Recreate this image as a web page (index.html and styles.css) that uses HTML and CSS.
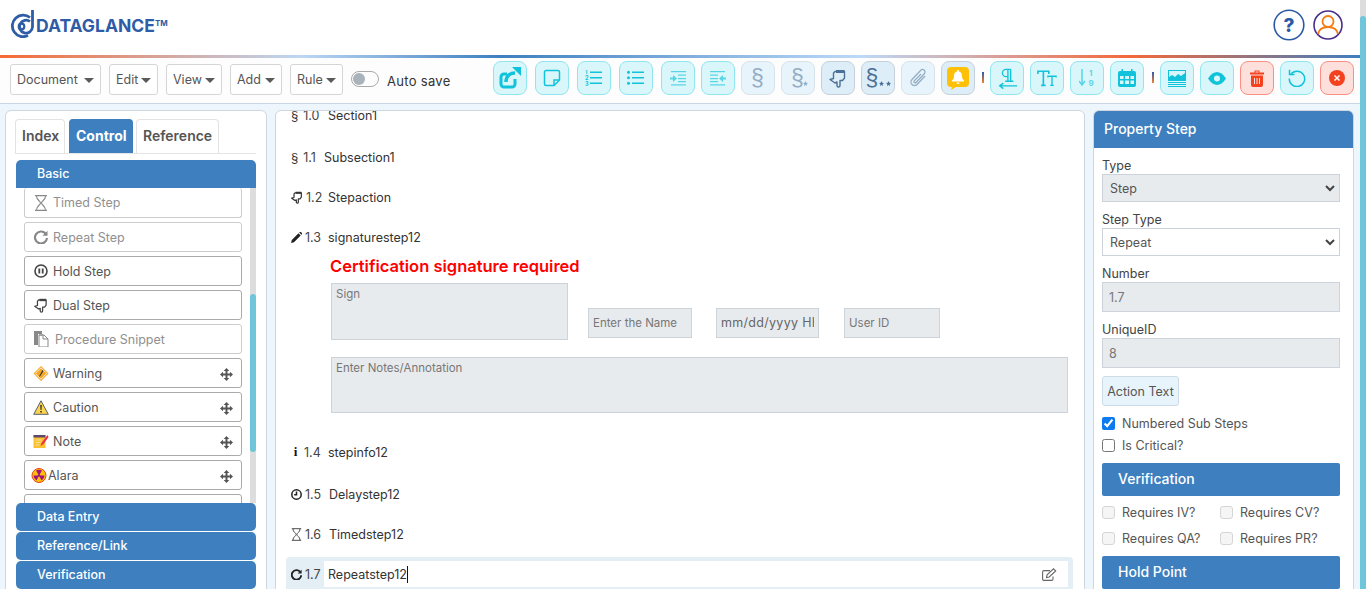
FILE: index.html
```html
<!DOCTYPE html>
<html>
  <head>
    <meta charset="UTF-8">
    <title>Dataglance</title>
    <link rel="stylesheet" href="styles.css">
  </head>
  <body>
    <div class="page">
      <header class="topbar">
        <div class="logo">
          <svg class="logo-mark" width="25" height="28" viewBox="0 0 25 28" fill="none" stroke="#2f5ca6" stroke-width="2.800"><path d="M22.500 0v17a6.500 6.500 0 1 1-2.500-5.500"/><path d="M18 25.500a10.800 10.800 0 1 1 2-18"/><circle cx="11.500" cy="16.500" r="2.800" stroke-width="2.200"/></svg>
          <span class="logo-text">DATAGLANCE<sup>TM</sup></span>
        </div>
        <div class="top-icons">
          <svg width="32" height="32" viewBox="0 0 32 32"><circle cx="16" cy="16" r="14.800" fill="none" stroke="#2b5aa5" stroke-width="1.600"/><text x="16" y="22.500" text-anchor="middle" class="help-mark">?</text></svg>
          <svg width="30" height="30" viewBox="0 0 30 30" fill="none"><circle cx="15" cy="15" r="14" stroke="#4a2d8c" stroke-width="1.600"/><circle cx="15" cy="11.500" r="5.500" stroke="#f57c14" stroke-width="1.800"/><path d="M5 24c1-5 5-7 10-7s9 2 10 7" stroke="#f57c14" stroke-width="1.800"/></svg>
        </div>
      </header>
      <div class="rainbow"></div>

      <nav class="toolbar">
        <div class="menus">
          <button class="menu w-doc">Document<i class="caret"></i></button>
          <button class="menu w-edit">Edit<i class="caret"></i></button>
          <button class="menu w-view">View<i class="caret"></i></button>
          <button class="menu w-add">Add<i class="caret"></i></button>
          <button class="menu w-rule">Rule<i class="caret"></i></button>
          <span class="toggle"><i></i></span>
          <span class="autosave">Auto save</span>
        </div>
        <div class="tools">
          <button class="tool cyan wide"><svg width="26" height="26" viewBox="0 0 26 26" fill="none" stroke="#11c3da" stroke-width="3"><path d="M18 14v5a3 3 0 0 1-3 3H7a3 3 0 0 1-3-3v-7a3 3 0 0 1 3-3h3"/><path d="M9 17c0-6 4-9 9-9" stroke-width="3.500"/><path d="M15 2h9v9z" fill="#11c3da" stroke="none"/></svg></button>
          <button class="tool cyan wide"><svg width="18" height="18" viewBox="0 0 18 18" fill="none" stroke="#11c3da" stroke-width="1.500"><path d="M1.500 3a1.500 1.500 0 0 1 1.500-1.500h12a1.500 1.500 0 0 1 1.500 1.500v8l-5.500 5.500H3a1.500 1.500 0 0 1-1.500-1.500z"/><path d="M16 11h-5v5.500"/></svg></button>
          <button class="tool cyan wide"><svg width="18" height="16" viewBox="0 0 18 16" fill="#11c3da"><rect x="5" y="1.500" width="12" height="1.500"/><rect x="5" y="7" width="12" height="1.500"/><rect x="5" y="12.500" width="12" height="1.500"/><text x="0" y="4" class="mini">1</text><text x="0" y="10" class="mini">2</text><text x="0" y="16" class="mini">3</text></svg></button>
          <button class="tool cyan wide"><svg width="18" height="16" viewBox="0 0 18 16" fill="#11c3da"><rect x="5" y="1.500" width="12" height="1.500"/><rect x="5" y="7" width="12" height="1.500"/><rect x="5" y="12.500" width="12" height="1.500"/><circle cx="1.500" cy="2.200" r="1.500"/><circle cx="1.500" cy="7.700" r="1.500"/><circle cx="1.500" cy="13.200" r="1.500"/></svg></button>
          <button class="tool cyan faded"><svg width="16" height="16" viewBox="0 0 16 16" fill="#11c3da"><rect x="1" y="1" width="15" height="1.200"/><rect x="8" y="4.500" width="8" height="1.200"/><rect x="8" y="8" width="8" height="1.200"/><rect x="8" y="11" width="8" height="1.200"/><rect x="1" y="14.300" width="15" height="1.200"/><path d="M0 7.500h3V5l4 3.500-4 3.500V9.500H0z"/></svg></button>
          <button class="tool cyan faded"><svg width="16" height="16" viewBox="0 0 16 16" fill="#11c3da"><rect y="1" width="15" height="1.200"/><rect y="4.500" width="8" height="1.200"/><rect y="8" width="8" height="1.200"/><rect y="11" width="8" height="1.200"/><rect y="14.300" width="15" height="1.200"/><path d="M16 7.500h-3V5L9 8.500l4 3.500V9.500h3z"/></svg></button>
          <button class="tool muted"><span class="sect">§</span></button>
          <button class="tool muted"><span class="sect">§</span><svg class="stars" width="5" height="5" viewBox="0 0 10 10" fill="#93aec5"><path d="M5 0l1.500 3.500L10 4 7.400 6.300 8 10 5 8 2 10l.6-3.700L0 4l3.500-.5z"/></svg></button>
          <button class="tool solid"><svg width="18" height="19" viewBox="0 0 18 19" fill="none" stroke="#4c7196" stroke-width="1.400"><path d="M6 2.500h9.500v6.500l-2 2.500H11v5a1.500 1.500 0 0 1-3 0v-3.500l-2 1-5-3.500 3.500-1V4z" stroke-linejoin="round"/><path d="M7 1h8.500v3H7z" fill="#4c7196" stroke="none"/></svg></button>
          <button class="tool solid"><span class="sect dark">§</span><svg class="stars two" width="12" height="5" viewBox="0 0 24 10" fill="#4c7196"><path d="M5 0l1.500 3.500L10 4 7.400 6.300 8 10 5 8 2 10l.6-3.700L0 4l3.500-.5z"/><path d="M19 0l1.500 3.500L24 4l-2.600 2.300L22 10l-3-2-3 2 .6-3.700L14 4l3.500-.5z"/></svg></button>
          <button class="tool muted"><svg width="20" height="22" viewBox="0 0 20 22" fill="none" stroke="#93aec5" stroke-width="1.300"><path d="M17 9l-8 8.500a3.500 3.500 0 0 1-5-5L13 3a2.500 2.500 0 0 1 3.500 3.500l-8.500 9a1.200 1.200 0 0 1-1.800-1.600L13 7"/></svg></button>
          <button class="tool solid bell"><svg width="22" height="24" viewBox="0 0 22 24"><path d="M4 0h14a4 4 0 0 1 4 4v12a4 4 0 0 1-4 4H9l-5 3 1-3H4a4 4 0 0 1-4-4V4a4 4 0 0 1 4-4z" fill="#ffc107"/><path d="M11 3a1 1 0 0 1 1 1.500c2.500.5 3 2.500 3 5 0 2 1 3 2 4v1H5v-1c1-1 2-2 2-4 0-2.500.5-4.500 3-5A1 1 0 0 1 11 3zM9.500 15.500h3a1.500 1.500 0 0 1-3 0z" fill="#fff"/></svg></button>
          <span class="tick t1"></span>
          <button class="tool cyan"><svg width="22" height="23" viewBox="0 0 24 24" fill="none" stroke="#11c3da" stroke-width="1.500"><path d="M16 2H11a4 4 0 0 0 0 8h2M13 2v13M16 2v13M10 15h9M5 20h18M8 17l-4 3 4 3"/></svg></button>
          <button class="tool cyan"><svg width="20" height="17" viewBox="0 0 22 18" fill="none" stroke="#11c3da" stroke-width="1.800"><path d="M1 4V1h12v3M7 1v15M4.500 16.500h5"/><path d="M12 8V6.500h9V8M16.500 6.500v10M14.500 16.500h4" stroke-width="1.500"/></svg></button>
          <button class="tool cyan faded"><svg width="16" height="18" viewBox="0 0 16 18" fill="none" stroke="#11c3da" stroke-width="1.500"><path d="M3 0v15M0 12l3 4 3-4"/><text x="10" y="7" class="mini strong">1</text><text x="9.500" y="17" class="mini strong">9</text></svg></button>
          <button class="tool cyan"><svg width="18" height="18" viewBox="0 0 18 18"><rect y="2" width="18" height="16" rx="2" fill="#11c3da"/><rect x="3.500" width="1.500" height="4" fill="#11c3da"/><rect x="13" width="1.500" height="4" fill="#11c3da"/><path d="M2 7h3.500v3H2zM7 7h4v3H7zM12.500 7H16v3h-3.500zM2 11.500h3.500V15H2zM7 11.500h4V15H7zM12.500 11.500H16V15h-3.500z" fill="#d9f7fb"/></svg></button>
          <span class="tick t2"></span>
          <button class="tool cyan"><svg width="18" height="17" viewBox="0 0 18 17" fill="#11c3da"><rect x=".5" y=".5" width="17" height="10" fill="#d9f7fb" stroke="#11c3da"/><path d="M1 10V7l3-2 3 2 3-3 3 2 4-3v7z"/><rect y="12" width="18" height="1"/><rect y="14" width="18" height="1"/><rect y="16" width="18" height="1"/></svg></button>
          <button class="tool cyan"><svg width="18" height="13" viewBox="0 0 18 13"><path d="M0 6.500C3 2 6 0 9 0s6 2 9 6.500C15 11 12 13 9 13s-6-2-9-6.500z" fill="#11c3da"/><circle cx="9" cy="6.500" r="3" fill="#d9f7fb"/></svg></button>
          <button class="tool red"><svg width="14" height="17" viewBox="0 0 14 17" fill="#f4411e"><path d="M0 2.500h14V4.500H0zM4.500 2.500V.5h5v2h-1V1.500h-3v1z"/><path d="M1 5.500h12V15a2 2 0 0 1-2 2H3a2 2 0 0 1-2-2z"/><path d="M4 8h1v6H4zM6.500 8h1v6h-1zM9 8h1v6H9z" fill="#fde0dc"/></svg></button>
          <button class="tool cyan"><svg width="18" height="18" viewBox="0 0 18 18" fill="none" stroke="#11c3da" stroke-width="1.500"><path d="M3 5a7.700 7.700 0 1 1-1.700 4.500"/><path d="M1.500 .8V5.500H6.500"/></svg></button>
          <button class="tool red"><svg width="16" height="16" viewBox="0 0 16 16"><circle cx="8" cy="8" r="8" fill="#f4411e"/><path d="M5.500 5.500l5 5M10.500 5.500l-5 5" stroke="#fff" stroke-width="1.500"/></svg></button>
        </div>
      </nav>

      <main class="workspace">
        <aside class="panel left-panel">
          <div class="tabs">
            <span class="tab">Index</span>
            <span class="tab on">Control</span>
            <span class="tab">Reference</span>
          </div>
          <div class="accordion">
            <div class="acc-head first">Basic</div>
            <div class="acc-body">
              <div class="items">
                <div class="item off cut">
                  <svg class="ico" width="14" height="16" viewBox="0 0 14 16" fill="none" stroke="#888" stroke-width="1.100"><path d="M1 .6h12M1 15.400h12M2.500 1c0 4 4 5 4 7s-4 3-4 7M11.500 1c0 4-4 5-4 7s4 3 4 7"/></svg>
                  <span>Timed Step</span>
                </div>
                <div class="item off">
                  <svg class="ico" width="14" height="14" viewBox="0 0 14 14" fill="none" stroke="#888" stroke-width="2.200"><path d="M11.500 3.500A6 6 0 1 0 13 8"/><path d="M13.500 .8v5h-5z" fill="#888" stroke="none"/></svg>
                  <span>Repeat Step</span>
                </div>
                <div class="item">
                  <svg class="ico" width="14" height="14" viewBox="0 0 14 14" fill="none"><circle cx="7" cy="7" r="6" stroke="#444" stroke-width="1.600"/><path d="M5.300 4.500v5M8.700 4.500v5" stroke="#444" stroke-width="1.800"/></svg>
                  <span>Hold Step</span>
                </div>
                <div class="item">
                  <svg class="ico" width="14" height="15" viewBox="0 0 18 19" fill="none" stroke="#444" stroke-width="1.600"><path d="M6 2.500h9.500v6.500l-2 2.500H11v5a1.500 1.500 0 0 1-3 0v-3.500l-2 1-5-3.500 3.500-1V4z" stroke-linejoin="round"/><path d="M7 1h8.500v3H7z" fill="#444" stroke="none"/></svg>
                  <span>Dual Step</span>
                </div>
                <div class="item off snip">
                  <svg class="ico" width="16" height="16" viewBox="0 0 16 16" fill="#888"><path d="M1 0h8v3H5v11H1z"/><path d="M6 4h5l4 4v8H6z" fill="#fff" stroke="#888"/><path d="M6 4h4v4h5" fill="none" stroke="#888"/></svg>
                  <span>Procedure Snippet</span>
                </div>
                <div class="item">
                  <svg class="ico" width="15" height="15" viewBox="0 0 15 15"><path d="M7.500 0L15 7.500 7.500 15 0 7.500z" fill="#f5a623"/><path d="M7.500 1.800L13.200 7.500 7.500 13.200 1.800 7.500z" fill="none" stroke="#fff" stroke-width=".8"/><path d="M9 4L6 9.500l-.5 1.500 1.300-1L10 5z" fill="#333"/></svg>
                  <span>Warning</span><i class="grip"><svg width="13" height="13" viewBox="0 0 12 12" fill="#555"><path d="M6 0l2.600 2.800H6.900v2.300h2.300V3.400L12 6 9.200 8.600V6.900H6.900v2.300h1.700L6 12 3.400 9.200h1.700V6.900H2.800v1.700L0 6l2.800-2.600v1.700h2.300V2.800H3.400z"/></svg></i>
                </div>
                <div class="item">
                  <svg class="ico" width="16" height="15" viewBox="0 0 16 15"><path d="M8 .8L15.300 14.300H.7z" fill="#fbd34c" stroke="#55606e" stroke-width="1"/><path d="M7.200 5h1.600l-.3 5h-1zM7.200 11h1.600v1.600H7.200z" fill="#333"/></svg>
                  <span>Caution</span><i class="grip"><svg width="13" height="13" viewBox="0 0 12 12" fill="#555"><path d="M6 0l2.600 2.800H6.900v2.300h2.300V3.400L12 6 9.200 8.600V6.900H6.900v2.300h1.700L6 12 3.400 9.200h1.700V6.900H2.800v1.700L0 6l2.800-2.600v1.700h2.300V2.800H3.400z"/></svg></i>
                </div>
                <div class="item">
                  <svg class="ico" width="15" height="14" viewBox="0 0 15 14"><rect y="1" width="12" height="13" fill="#fbc02d"/><rect y="1" width="12" height="2.500" fill="#5d4a6a"/><path d="M2 6h6M2 8.500h5M2 11h4" stroke="#f6e3a0"/><path d="M14 1L8 9l-1 3 3-2 5-7z" fill="#e6304a"/></svg>
                  <span>Note</span><i class="grip"><svg width="13" height="13" viewBox="0 0 12 12" fill="#555"><path d="M6 0l2.600 2.800H6.900v2.300h2.300V3.400L12 6 9.200 8.600V6.900H6.900v2.300h1.700L6 12 3.400 9.200h1.700V6.900H2.800v1.700L0 6l2.800-2.600v1.700h2.300V2.800H3.400z"/></svg></i>
                </div>
                <div class="item alara">
                  <svg class="ico" width="15" height="15" viewBox="0 0 15 15"><circle cx="7.500" cy="7.500" r="7" fill="#ffc107" stroke="#e6401e"/><path d="M7.500 7.500L4.500 2.500a6 6 0 0 1 6 0zM7.500 7.500l5.500 0a6 6 0 0 1-3 5zM7.500 7.500L5 12.500a6 6 0 0 1-3-5z" fill="#a3117a"/><circle cx="7.500" cy="7.500" r="1.200" fill="#a3117a"/></svg>
                  <span>Alara</span><i class="grip"><svg width="13" height="13" viewBox="0 0 12 12" fill="#555"><path d="M6 0l2.600 2.800H6.900v2.300h2.300V3.400L12 6 9.200 8.600V6.900H6.900v2.300h1.700L6 12 3.400 9.200h1.700V6.900H2.800v1.700L0 6l2.800-2.600v1.700h2.300V2.800H3.400z"/></svg></i>
                </div>
                <div class="item"></div>
              </div>
              <div class="list-scroll"><i></i></div>
            </div>
            <div class="acc-head">Data Entry</div>
            <div class="acc-head">Reference/Link</div>
            <div class="acc-head">Verification</div>
          </div>
        </aside>

        <section class="panel editor">
          <div class="step s0">
            <span class="num"><b class="sym">§</b> 1.0</span><span class="txt">Section1</span>
          </div>
          <div class="step s1">
            <span class="num"><b class="sym">§</b> 1.1</span><span class="txt back">Subsection1</span>
          </div>
          <div class="step s2">
            <span class="num"><svg width="12" height="13" viewBox="0 0 18 19" fill="none" stroke="#333" stroke-width="1.800"><path d="M6 2.500h9.500v6.500l-2 2.500H11v5a1.500 1.500 0 0 1-3 0v-3.500l-2 1-5-3.500 3.500-1V4z" stroke-linejoin="round"/><path d="M7 1h8.500v3H7z" fill="#333" stroke="none"/></svg> 1.2</span><span class="txt">Stepaction</span>
          </div>
          <div class="step s3">
            <span class="num"><svg width="11" height="11" viewBox="0 0 11 11" fill="#222"><path d="M0 11l.8-3L7.500 1.300l2.200 2.200L3 10.200zM8.200.6l.5-.5a1 1 0 0 1 1.200 0l1 1a1 1 0 0 1 0 1.200l-.5.500z"/></svg> 1.3</span><span class="txt">signaturestep12</span>
          </div>
          <div class="sign-block">
            <p class="cert">Certification signature required</p>
            <div class="sign-row">
              <textarea class="field sign" placeholder="Sign" disabled></textarea>
              <input class="field f-name" placeholder="Enter the Name" disabled>
              <input class="field f-date" value="mm/dd/yyyy HH:MM" disabled>
              <input class="field f-user" placeholder="User ID" disabled>
            </div>
            <textarea class="field notes" placeholder="Enter Notes/Annotation" disabled></textarea>
          </div>
          <div class="step s4">
            <span class="num"><b class="info">i</b> 1.4</span><span class="txt">stepinfo12</span>
          </div>
          <div class="step s5">
            <span class="num"><svg width="11" height="11" viewBox="0 0 11 11" fill="none" stroke="#222" stroke-width="1.500"><circle cx="5.500" cy="5.500" r="4.700"/><path d="M5.500 2.500v3.300H3.200"/></svg> 1.5</span><span class="txt">Delaystep12</span>
          </div>
          <div class="step s6">
            <span class="num"><svg width="11" height="13" viewBox="0 0 14 16" fill="none" stroke="#333" stroke-width="1.100"><path d="M1 .6h12M1 15.400h12M2.500 1c0 4 4 5 4 7s-4 3-4 7M11.500 1c0 4-4 5-4 7s4 3 4 7"/></svg> 1.6</span><span class="txt">Timedstep12</span>
          </div>
          <div class="step current">
            <span class="num"><svg width="11" height="11" viewBox="0 0 14 14" fill="none" stroke="#222" stroke-width="2.400"><path d="M11.500 3.500A6 6 0 1 0 13 8"/><path d="M13.500 .8v5h-5z" fill="#222" stroke="none"/></svg> 1.7</span>
            <span class="cur-box"><span class="cur-text">Repeatstep12</span>
              <svg class="edit" width="15" height="13" viewBox="0 0 15 13" fill="none" stroke="#666" stroke-width="1.100"><path d="M11 8.500V11a1.400 1.400 0 0 1-1.400 1.400H2A1.400 1.400 0 0 1 .6 11V4A1.400 1.400 0 0 1 2 2.600h6"/><path d="M4.500 9.500l.6-2.700L11.500.8l2.200 2.200L7.200 9z"/></svg>
            </span>
          </div>
        </section>

        <aside class="panel props">
          <h2 class="props-title">Property Step</h2>
          <div class="props-body">
            <label class="lbl">Type</label>
            <select class="sel gray" disabled><option>Step</option></select>
            <label class="lbl">Step Type</label>
            <select class="sel"><option>Repeat</option></select>
            <label class="lbl">Number</label>
            <input class="inp" value="1.7" disabled>
            <label class="lbl">UniqueID</label>
            <input class="inp" value="8" disabled>
            <button class="action">Action Text</button>
            <div class="chk c1"><input type="checkbox" checked> Numbered Sub Steps</div>
            <div class="chk c2"><input type="checkbox"> Is Critical?</div>
            <div class="bar">Verification</div>
            <div class="req-grid">
              <div class="chk"><input class="dis" type="checkbox" disabled> Requires IV?</div>
              <div class="chk"><input class="dis" type="checkbox" disabled> Requires CV?</div>
              <div class="chk"><input class="dis" type="checkbox" disabled> Requires QA?</div>
              <div class="chk"><input class="dis" type="checkbox" disabled> Requires PR?</div>
            </div>
            <div class="bar hold">Hold Point</div>
          </div>
        </aside>
      </main>
    </div>
    <div class="page-scroll"><i></i></div>
  </body>
</html>
```

FILE: styles.css
```css
* {
  box-sizing: border-box;
}

html, body {
  height: 589px;
  margin: 0;
  overflow: hidden;
}

body {
  background-color: #edf5fd;
  color: #444;
  font-family: Inter, "Noto Sans", sans-serif;
  font-size: 12.5px;
  position: relative;
}

.page {
  width: 1360px;
  height: 589px;
  overflow: hidden;
}

/* page scrollbar */
.page-scroll {
  position: absolute;
  top: 0;
  right: 0;
  width: 6px;
  height: 589px;
  background-color: #ddd;
}

.page-scroll i {
  display: block;
  margin-top: 16px;
  height: 573px;
  background-color: #6fc6da;
  border-radius: 3px 3px 0 0;
}

/* top bar */
.topbar {
  height: 55px;
  background-color: #fff;
  display: flex;
  align-items: center;
  justify-content: space-between;
  padding: 0 17px 0 10px;
}

.logo {
  display: flex;
  align-items: center;
  margin-top: -8px;
}

.logo-text {
  color: #2f5ca6;
  font-size: 17.5px;
  font-weight: 700;
  margin-left: 1px;
  margin-top: 3px;
}

.logo-text sup {
  font-size: 8px;
  vertical-align: 6px;
  line-height: 0;
}

.top-icons {
  display: flex;
  align-items: center;
  gap: 8px;
  margin-top: -6px;
}

.help-mark {
  fill: #2b5aa5;
  font-size: 19px;
  font-weight: 800;
  font-family: Inter, sans-serif;
}

.rainbow {
  height: 3px;
  background: linear-gradient(90deg, #f56a35 0, #bcd7f3 300px, #3e7fbf 500px, #bcd9f8 860px, #f4683a 1130px, #3e7fbf 1360px);
}

/* toolbar */
.toolbar {
  height: 46px;
  background-color: #fdfdfd;
  border-bottom: 1px solid #c9d4e4;
  display: flex;
  justify-content: space-between;
  padding: 3px 6px 0 10px;
}

.menus {
  display: flex;
  align-items: flex-start;
}

.menu {
  height: 31px;
  margin: 3px 8px 0 0;
  padding: 0 6px;
  background-color: #fff;
  border: 1px solid #d5d5d5;
  border-radius: 3px;
  color: #555;
  font: inherit;
  display: flex;
  align-items: center;
  justify-content: space-between;
}

.w-doc { width: 91px; }
.w-edit { width: 49px; }
.w-view { width: 56px; }
.w-add { width: 52px; margin-right: 8px; }
.w-rule { width: 53px; }

.caret {
  border-top: 5px solid #5a5a5a;
  border-left: 5px solid transparent;
  border-right: 5px solid transparent;
  margin-top: 2px;
}

.toggle {
  width: 28px;
  height: 16px;
  margin: 10px 0 0 0;
  border: 1px solid #aaa;
  border-radius: 8px;
  padding: 1px;
}

.toggle i {
  display: block;
  width: 12px;
  height: 12px;
  border-radius: 50%;
  background-color: #a8b3bc;
}

.autosave {
  margin: 12px 0 0 8px;
  color: #333;
  font-size: 13px;
  letter-spacing: 0.3px;
}

.tools {
  display: flex;
  gap: 6px;
  align-items: flex-start;
}

.tool {
  width: 34px;
  height: 34px;
  padding: 0;
  border: 1px solid #8fe6ef;
  border-radius: 8px;
  background-color: #d9f7fb;
  display: flex;
  align-items: center;
  justify-content: center;
  position: relative;
}

.wide {
  margin-right: 2px;
}

.faded svg {
  opacity: 0.65;
}

.muted {
  background-color: #e8f4fb;
  border-color: #d9e3ea;
}

.solid {
  background-color: #deeef9;
  border-color: #c5d0da;
}

.bell {
  padding-top: 1px;
}

.red {
  background-color: #fde0dc;
  border-color: #f98f84;
}

.sect {
  color: #93aec5;
  font-family: "Liberation Sans", sans-serif;
  font-size: 23px;
  margin-left: -1px;
}

.sect.dark {
  color: #4c7196;
  margin-left: -12px;
}

.stars {
  position: absolute;
  left: 21px;
  bottom: 8px;
}

.stars.two {
  left: 17px;
}

.tick {
  width: 2px;
  height: 11px;
  margin-top: 11px;
  background: linear-gradient(#2f5ca6, #f08030);
}

.t1 { margin-left: 1px; }
.t2 { margin-left: 2px; }

.mini {
  font-family: Inter, sans-serif;
  font-size: 5.500px;
  font-weight: 700;
  stroke: none;
  fill: #11c3da;
}

.mini.strong {
  font-size: 8px;
}

/* three panels */
.workspace {
  display: flex;
  align-items: flex-start;
  gap: 8px;
  padding: 6px 6px 0 5px;
}

.panel {
  height: 600px;
  background-color: #fff;
  border: 1px solid #cfd6dd;
  border-radius: 6px;
  overflow: hidden;
}

.left-panel {
  width: 262px;
  padding: 8px 10px;
}

.tabs {
  display: flex;
  gap: 3px;
  height: 35px;
  margin-left: -1px;
  border-bottom: 1px solid #e5e5e5;
}

.tab {
  padding: 0 6px;
  border: 1px solid #e3e3e3;
  border-bottom: 0;
  border-radius: 4px 4px 0 0;
  color: #555;
  font-size: 14px;
  font-weight: 600;
  line-height: 31px;
}

.tab:first-child { width: 50px; }
.tab.on {
  width: 64px;
  background-color: #3d7fbf;
  border-color: #3d7fbf;
  color: #fff;
  font-weight: 700;
  margin-left: 1px;
}

.accordion {
  margin-top: 6px;
  width: 240px;
}

.acc-head {
  height: 28px;
  margin-bottom: 1px;
  background-color: #3d7fbf;
  border-radius: 5px;
  color: #fff;
  font-size: 12.5px;
  font-weight: 500;
  line-height: 28px;
  padding-left: 21px;
}

.acc-head.first {
  border-radius: 5px 5px 0 0;
  margin-bottom: 0;
}

.acc-body {
  height: 315px;
  overflow: hidden;
  display: flex;
  justify-content: space-between;
}

.items {
  padding-left: 8px;
  height: 315px;
  overflow: hidden;
}

.item {
  width: 218px;
  height: 30px;
  margin-bottom: 4px;
  border: 1px solid #aaa;
  border-radius: 3px;
  background-color: #fff;
  display: flex;
  align-items: center;
  padding-left: 8px;
  color: #555;
  font-size: 12.5px;
}

.item.off {
  border-color: #ccc;
  color: #909090;
}

.item.cut {
  border-top: 0;
}

.item .ico {
  width: 16px;
  flex: none;
  margin-right: 4px;
}

.item.snip .ico {
  margin-right: 6px;
}

.item.alara {
  padding-left: 6px;
}

.item.alara .ico {
  margin-right: 1px;
}

.grip {
  margin: 2px 8px 0 auto;
  height: 13px;
  line-height: 0;
}

.list-scroll {
  width: 6px;
  height: 315px;
  background-color: #ddd;
}

.list-scroll i {
  display: block;
  margin-top: 106px;
  height: 158px;
  background-color: #6fc6da;
  border-radius: 3px;
}

/* editor */
.editor {
  width: 810px;
  padding-left: 10px;
  color: #333;
  font-size: 12.5px;
}

.step {
  display: flex;
  align-items: center;
  height: 20px;
}

.num {
  width: 42px;
  padding-left: 5px;
  color: #444;
  flex: none;
  white-space: nowrap;
  display: flex;
  align-items: center;
  gap: 3px;
}

.sym {
  font-family: "Liberation Sans", sans-serif;
  font-size: 13px;
  font-weight: 400;
  color: #333;
  margin-right: 2px;
}

.info {
  font-family: "Liberation Serif", serif;
  font-size: 13px;
  width: 9px;
  text-align: center;
  color: #111;
  margin-right: 1px;
}

.txt.back {
  margin-left: -4px;
}

.s0 { margin-top: -6px; }
.s1 { margin-top: 22px; }
.s2 { margin-top: 20px; }
.s3 { margin-top: 20px; }
.s4 { margin-top: 29px; }
.s5 { margin-top: 22px; }
.s6 { margin-top: 20px; }

.s5 .txt, .s6 .txt {
  margin-left: 1px;
}

.sign-block {
  padding-left: 45px;
}

.cert {
  margin: 8px 0 6px -1px;
  color: #f00;
  font-size: 16.5px;
  font-weight: 600;
  line-height: 22px;
  white-space: nowrap;
}

.sign-row {
  display: flex;
  align-items: flex-start;
}

.field {
  display: block;
  background-color: #e8ebee;
  border: 1px solid #ccd3da;
  color: #666;
  font: inherit;
  font-size: 11.5px;
  padding: 3px 4px;
  resize: none;
}

.field::placeholder {
  color: #777;
}

.sign {
  width: 237px;
  height: 57px;
}

.f-name {
  width: 104px;
  height: 30px;
  margin: 25px 0 0 20px;
  padding-bottom: 4px;
}

.f-date {
  width: 103px;
  height: 30px;
  margin: 25px 0 0 24px;
  font-size: 12.5px;
  letter-spacing: 0.3px;
  padding-bottom: 4px;
}

.f-user {
  width: 96px;
  height: 30px;
  margin: 25px 0 0 25px;
  padding-bottom: 4px;
}

.notes {
  width: 737px;
  height: 56px;
  margin-top: 17px;
}

.step.current {
  height: 32px;
  width: 787px;
  margin-top: 13px;
  background-color: #e3eef5;
  border-radius: 4px 4px 0 0;
  padding: 4px 5px 0 0;
  align-items: flex-start;
}

.current .num {
  width: 38px;
  height: 26px;
}

.cur-box {
  flex: 1;
  height: 26px;
  background-color: #fff;
  padding: 0 11px 0 4px;
  display: flex;
  align-items: center;
  justify-content: space-between;
}

.cur-text {
  border-right: 1px solid #111;
  line-height: 17px;
}

/* property panel */
.props {
  width: 261px;
}

.props-title {
  margin: 0;
  height: 37px;
  background-color: #3d7fbf;
  color: #fff;
  font-size: 14px;
  font-weight: 500;
  line-height: 36px;
  padding-left: 10px;
}

.props-body {
  padding: 9px 13px 0 8px;
  font-size: 12.5px;
}

.lbl {
  display: block;
  color: #444;
  line-height: 17px;
}

.sel, .inp {
  display: block;
  width: 238px;
  border: 1px solid #ccd3da;
  background-color: #fff;
  color: #555;
  font: inherit;
  padding: 0 7px;
  margin-bottom: 9px;
}

.sel {
  height: 28px;
  appearance: none;
  background-image: url("data:image/svg+xml,%3Csvg xmlns='http://www.w3.org/2000/svg' width='10' height='7' viewBox='0 0 10 7'%3E%3Cpath d='M1 1l4 4 4-4' fill='none' stroke='%23444' stroke-width='2'/%3E%3C/svg%3E");
  background-repeat: no-repeat;
  background-position: right 4px center;
  opacity: 1;
}

.sel.gray {
  background-color: #e8ebee;
}

.inp {
  height: 30px;
  background-color: #e8ebee;
  color: #777;
  padding: 0 6px;
}

.action {
  display: block;
  width: 77px;
  height: 30px;
  padding: 0;
  margin: -1px 0 8px 0;
  background-color: #e8f4fb;
  border: 1px solid #ccdbe5;
  border-radius: 3px;
  color: #555;
  font: inherit;
}

.chk {
  display: flex;
  align-items: center;
  color: #555;
  white-space: nowrap;
  height: 19px;
}

.chk input {
  width: 13px;
  height: 13px;
  margin: 0 7px 0 0;
  accent-color: #0d7bf0;
}

.chk input.dis {
  appearance: none;
  background-color: #f5f5f5;
  border: 1px solid #d5d5d5;
  border-radius: 3px;
}

.c2 { margin-top: 3px; }

.bar {
  margin-top: 8px;
  height: 33px;
  width: 238px;
  background-color: #3d7fbf;
  border-radius: 2px;
  color: #fff;
  font-size: 14px;
  font-weight: 500;
  line-height: 32px;
  padding-left: 16px;
}

.req-grid {
  display: grid;
  grid-template-columns: 118px 120px;
  row-gap: 7px;
  margin-top: 7px;
}
```
